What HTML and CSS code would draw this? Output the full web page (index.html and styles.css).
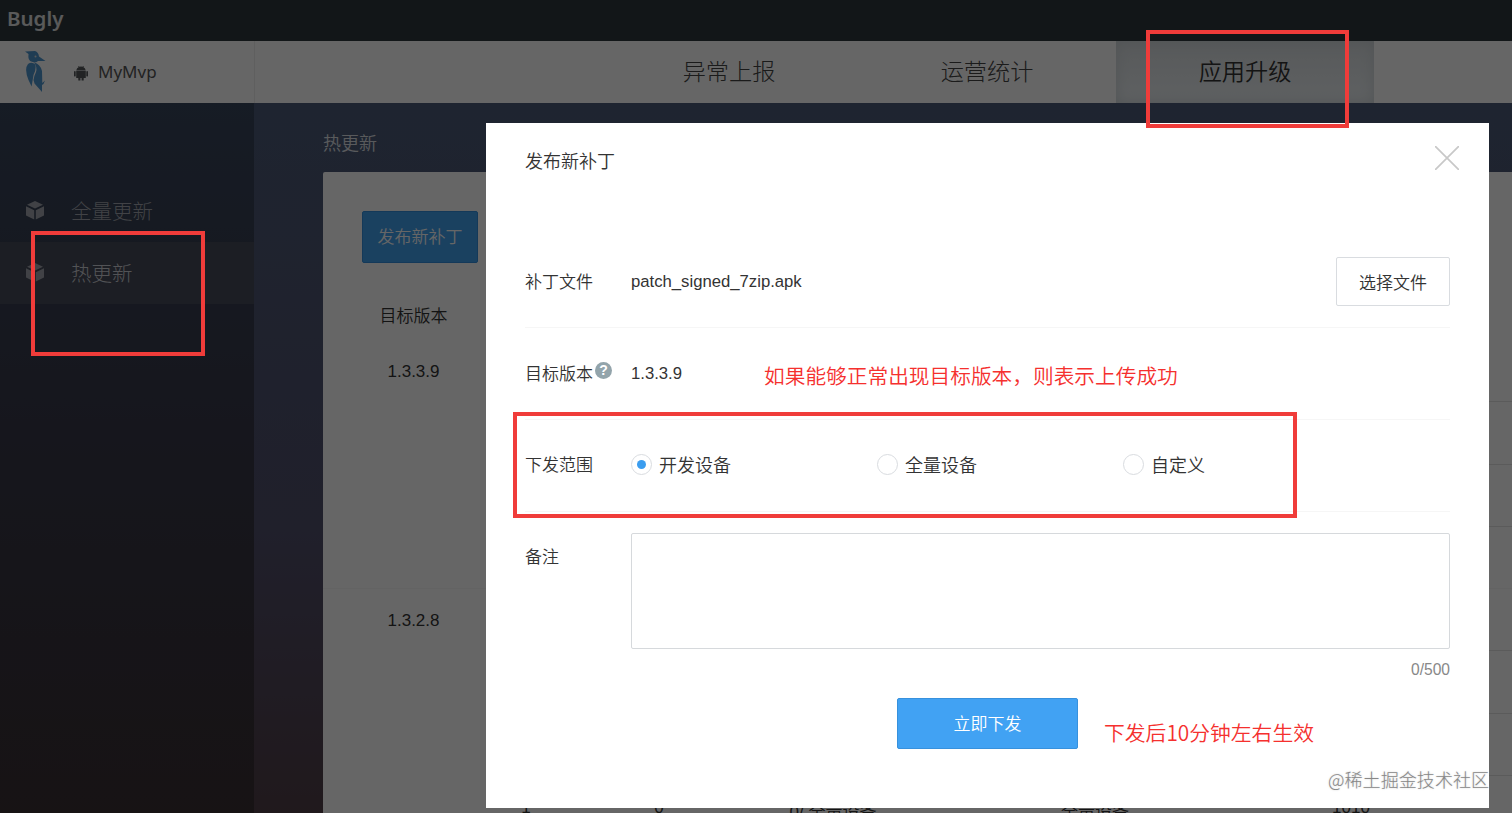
FILE: index.html
```html
<!DOCTYPE html>
<html lang="zh-CN">

<head>
    <meta charset="UTF-8">
    <meta name="viewport" content="width=device-width, initial-scale=1.0">
    <title>Bugly</title>
    <link rel="stylesheet" href="styles.css">
</head>

<body>
    <div class="topbar">Bugly</div>
    <header class="header">
        <div class="app">
            <svg class="bird" width="22" height="42" viewBox="0 0 22 42">
                <path fill="#4f96cf" d="M0 .6L10 0Q13.500 1 14 5.500L20.500 10H13Q11 12.500 7 10.800Q2.500 10 3.500 3Z" />
                <path fill="#4f96cf" d="M3 13Q7 10.500 10.300 13.500Q11.500 18 8.500 24L6.600 35.500L3.500 29Q-1 18 3 13Z" />
                <path fill="#4f96cf" d="M9 11.500Q15 12.500 17 20L17.300 32L20 29.500L18.500 33L17 34V41L9.500 32.500L8.500 29Q9 25 11 21Q12.500 16 9 11.500Z" />
                <circle cx="10.500" cy="5.500" r="1" fill="#ddd" />
            </svg>
            <svg class="android" width="14" height="15" viewBox="0 0 14 15">
                <path fill="#55595b" d="M2.200 4.500Q2.800 1.800 4.800 1L4 0H4.800L5.500.7Q7 .3 8.500.7L9.200 0H10L9.200 1Q11.200 1.800 11.800 4.500ZM2.200 5H11.800V12H9.700V14.500H7.600V12H6.400V14.500H4.300V12H2.200ZM0 5.500Q.8 4.600 1.700 5.500V10Q.8 11 0 10ZM12.300 5.500Q13.200 4.600 14 5.500V10Q13.200 11 12.300 10Z" />
            </svg>
            <span>MyMvp</span>
        </div>
        <nav class="nav">
            <a>异常上报</a>
            <a>运营统计</a>
            <a class="active">应用升级</a>
        </nav>
    </header>

    <div class="main">
        <aside class="sidebar">
            <a>
                <svg width="18" height="19" viewBox="0 0 18 19"><path d="M9 0L17 3.8L9 7.6L1 3.8ZM0 5.3L8.2 9.2V18.6L0 14.4ZM18 5.3L9.8 9.2V18.6L18 14.4Z" /></svg>
                全量更新
            </a>
            <a class="active">
                <svg width="18" height="19" viewBox="0 0 18 19"><path d="M9 0L17 3.8L9 7.6L1 3.8ZM0 5.3L8.2 9.2V18.6L0 14.4ZM18 5.3L9.8 9.2V18.6L18 14.4Z" /></svg>
                热更新
            </a>
        </aside>
        <section class="content">
            <h1>热更新</h1>
            <div class="panel">
                <button class="publish">发布新补丁</button>
                <div class="row row-head"><span>目标版本</span></div>
                <div class="row row-group">
                    <span>1.3.3.9</span>
                    <div class="ops"><i></i><i></i><i></i></div>
                </div>
                <div class="row row-group second">
                    <span>1.3.2.8</span>
                    <div class="ops"><i></i><i></i><i></i></div>
                </div>
                <div class="row row-last">
                    <span></span>
                    <span>1</span>
                    <span>0</span>
                    <span>0/ 全量设备</span>
                    <span>全量设备</span>
                    <span>1010</span>
                </div>
            </div>
        </section>
    </div>

    <div class="overlay"></div>

    <div class="modal">
        <div class="modal-head">
            <h2>发布新补丁</h2>
            <svg width="24" height="24" viewBox="0 0 24 24"><path d="M0 0L24 24M24 0L0 24" stroke="#c8c8c8" stroke-width="1.7" /></svg>
        </div>
        <div class="field">
            <label>补丁文件</label>
            <span class="latin">patch_signed_7zip.apk</span>
            <button class="choose">选择文件</button>
        </div>
        <div class="field">
            <label>目标版本<b class="help">?</b></label>
            <span class="latin">1.3.3.9</span>
        </div>
        <div class="field scope">
            <label>下发范围</label>
            <div class="radio checked"><i></i>开发设备</div>
            <div class="radio"><i></i>全量设备</div>
            <div class="radio"><i></i>自定义</div>
        </div>
        <div class="field note">
            <label>备注</label>
            <textarea></textarea>
        </div>
        <div class="count">0/500</div>
        <button class="submit">立即下发</button>
    </div>

    <!-- red marks over the page -->
    <div class="mark mark-nav"></div>
    <div class="mark mark-side"></div>
    <div class="mark mark-scope"></div>
    <div class="tip tip-version">如果能够正常出现目标版本，则表示上传成功</div>
    <div class="tip tip-submit">下发后10分钟左右生效</div>
    <div class="watermark">@稀土掘金技术社区</div>
</body>

</html>
```
FILE: styles.css
```css
* {
    box-sizing: border-box;
}

body {
    margin: 0;
    height: 813px;
    overflow: hidden;
    position: relative;
    font-family: "Liberation Sans", "Noto Sans CJK SC", sans-serif;
    font-size: 17px;
    font-weight: 350;
    color: #333;
    background: #3f4b63;
}

h1,
h2 {
    margin: 0;
    font-size: 18px;
    font-weight: 350;
}

button {
    font: inherit;
    padding: 0;
    border-radius: 2px;
}

.topbar {
    height: 41px;
    padding: 0 7px;
    line-height: 36px;
    background: #2d393e;
    color: #e0e0e0;
    font-family: "Noto Sans", sans-serif;
    font-size: 20.5px;
    font-weight: 600;
}

.header {
    display: flex;
    height: 62px;
    background: #fff;
}

.app {
    display: flex;
    align-items: center;
    width: 255px;
    padding-left: 25px;
    border-right: 1px solid #eee;
    font-family: "Noto Sans", sans-serif;
    font-size: 17px;
    font-weight: 400;
    color: #555;
}

.app span {
    padding-bottom: 1px;
}

.android {
    margin: 2px 10px 0 27px;
}

.nav {
    display: flex;
    margin-left: 345px;
}

.nav a {
    width: 258px;
    line-height: 59px;
    text-align: center;
    font-family: "Noto Sans CJK SC", sans-serif;
    font-size: 23.2px;
    font-weight: 300;
    color: #444;
}

.nav .active {
    color: #333;
    font-weight: 350;
    background: linear-gradient(#dadfe2, #edf2f5);
    box-shadow: inset 0 0 14px #cbd2d6;
}

.main {
    display: flex;
    height: 710px;
    background: linear-gradient(#4d5b79 0, #50506c 60%, #503f48 100%);
}

.sidebar {
    width: 254px;
    padding-top: 77px;
    background: linear-gradient(#37465c 0, #38394a 45%, #3a3034 100%);
}

.sidebar a {
    display: flex;
    align-items: center;
    gap: 27px;
    height: 62px;
    padding: 0 0 2px 26px;
    font-size: 20.5px;
    font-weight: 300;
    color: #a2a6ae;
}

.sidebar svg {
    fill: #a2a6ae;
}

.sidebar .active {
    background: #474b5a;
    color: #cdd0d6;
}

.content {
    flex: 1;
    padding: 28px 0 0 69px;
}

.content h1 {
    line-height: 27px;
    color: #dfe1e7;
}

.panel {
    height: 660px;
    margin-top: 14px;
    padding-top: 39px;
    overflow: hidden;
    background: #fff;
    border-radius: 2px 0 0 0;
}

.publish {
    display: block;
    width: 116px;
    height: 52px;
    margin-left: 39px;
    padding-bottom: 3px;
    border: 1px solid #3290de;
    background: #41a2f1;
    color: #fff;
}

.row {
    display: grid;
    grid-template-columns: 181px 44px 222px 126px 398px 114px 1fr;
    text-align: center;
}

.row-head {
    height: 77px;
    padding-top: 39px;
}

.row-group {
    height: 249px;
    padding-top: 22px;
    border-bottom: 1px solid #f7f7f7;
}

.row-group.second {
    height: 189px;
    border: 0;
}

.ops {
    grid-column: 7;
    margin-top: -22px;
}

.ops i {
    display: block;
    height: 62.25px;
    border-bottom: 1px solid #e4e4e4;
}

.row-last {
    height: 62px;
    padding-top: 20px;
    white-space: nowrap;
}

.overlay {
    position: absolute;
    inset: 0;
    background: rgba(0, 0, 0, 0.6);
}

.modal {
    position: absolute;
    left: 486px;
    top: 123px;
    width: 1003px;
    height: 685px;
    padding: 0 39px;
    background: #fff;
    color: #333;
}

.modal-head {
    display: flex;
    justify-content: space-between;
    height: 113px;
    padding-top: 23px;
}

.modal-head h2 {
    line-height: 32px;
}

.modal-head svg {
    margin-right: -9px;
}

.field {
    display: flex;
    align-items: center;
    height: 92px;
    border-bottom: 1px solid #f6f6f6;
}

.field label {
    display: flex;
    width: 106px;
    flex-shrink: 0;
    padding-bottom: 2px;
}

.scope {
    padding-bottom: 3px;
}

.latin {
    font-size: 16.7px;
}

.choose {
    width: 114px;
    height: 49px;
    margin-left: auto;
    border: 1px solid #d9dce0;
    background: #fff;
    color: #333;
}

.help {
    width: 17px;
    height: 17px;
    margin: 2px 0 0 2px;
    border-radius: 50%;
    background: #93a4ab;
    color: #fff;
    font-size: 14px;
    line-height: 17px;
    text-align: center;
}

.radio {
    display: flex;
    align-items: center;
    gap: 7px;
    width: 246px;
    font-size: 18px;
}

.radio i {
    display: flex;
    width: 21px;
    height: 21px;
    border: 1px solid #d9dce0;
    border-radius: 50%;
}

.radio.checked i::after {
    content: "";
    width: 9px;
    height: 9px;
    margin: auto;
    border-radius: 50%;
    background: #3b9def;
}

.field.note {
    align-items: flex-start;
    height: 137px;
    padding-top: 21px;
    border: 0;
}

.note label {
    padding-top: 10px;
}

.note textarea {
    flex: 1;
    height: 116px;
    border: 1px solid #d6d9dc;
    border-radius: 2px;
    resize: none;
}

.count {
    margin-top: 11px;
    line-height: 20px;
    text-align: right;
    font-size: 15.6px;
    color: #888;
}

.submit {
    display: block;
    width: 181px;
    height: 51px;
    margin: 18px 0 0 372px;
    padding-bottom: 2px;
    border: 1px solid #3791dd;
    background: #41a2f3;
    color: #fff;
}

/* marks */
.mark {
    position: absolute;
    border: 4px solid #f03c3a;
}

.mark-nav {
    left: 1146px;
    top: 30px;
    width: 203px;
    height: 98px;
}

.mark-side {
    left: 31px;
    top: 231px;
    width: 174px;
    height: 125px;
}

.mark-scope {
    left: 513px;
    top: 412px;
    width: 784px;
    height: 106px;
}

.tip {
    position: absolute;
    white-space: nowrap;
    font-family: "Noto Sans CJK SC", sans-serif;
    font-size: 20.7px;
    line-height: 30px;
    color: #f5302e;
}

.tip-version {
    left: 764px;
    top: 360px;
}

.tip-submit {
    left: 1104px;
    top: 717px;
    font-size: 20.8px;
}

.watermark {
    position: absolute;
    left: 1328px;
    top: 765px;
    white-space: nowrap;
    font-family: "Noto Sans CJK SC", sans-serif;
    font-size: 18.1px;
    font-weight: 300;
    line-height: 28px;
    color: #888;
    text-shadow: 0 0 2px #ccc;
}
```
